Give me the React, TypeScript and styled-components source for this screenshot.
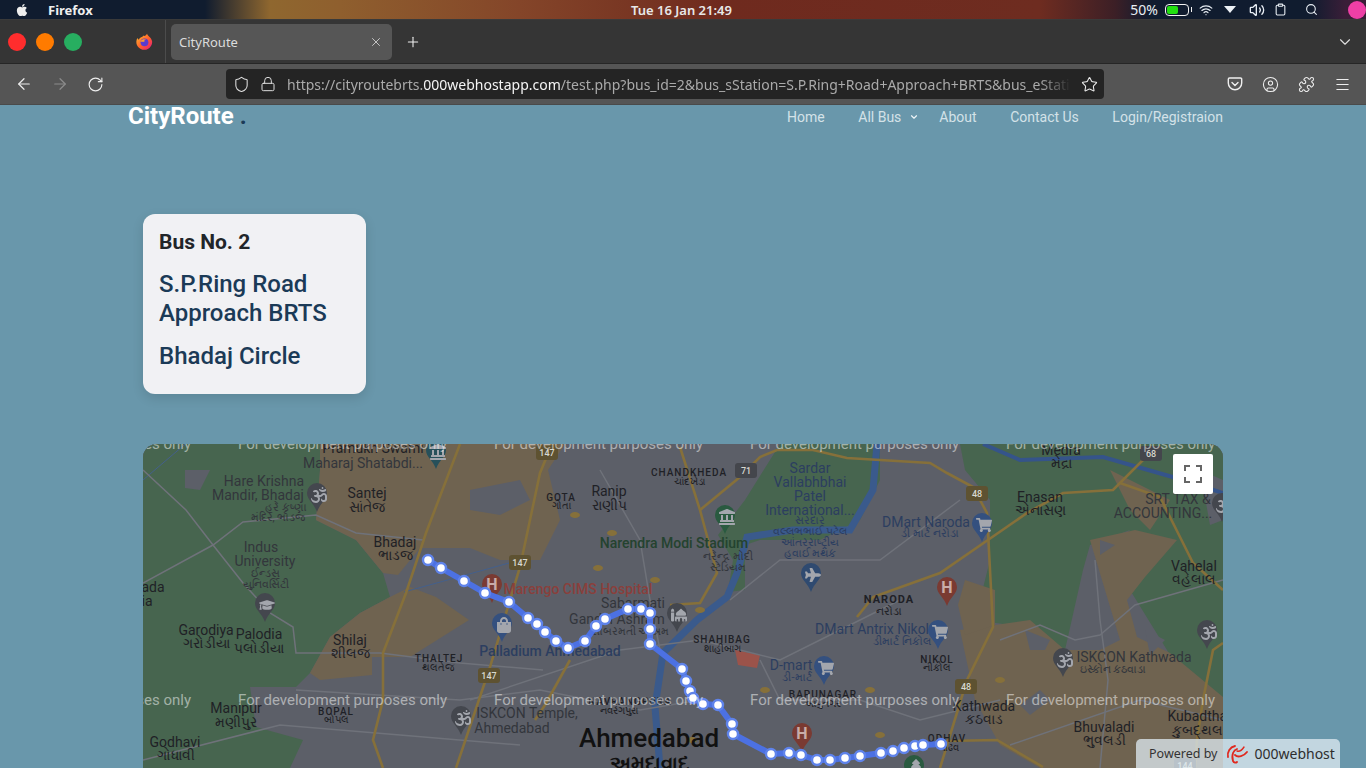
import React from "react";
import styled, { createGlobalStyle } from "styled-components";
import {
  ArrowLeft,
  ArrowRight,
  RotateCw,
  Shield,
  Lock,
  Star,
  Menu,
  Puzzle,
  CircleUser,
  ChevronDown,
  X,
  Plus,
  Wifi,
  Volume2,
  Search,
  Clipboard,
} from "lucide-react";
import {
  FaApple,
  FaOm,
  FaShoppingCart,
  FaShoppingBag,
  FaPlane,
  FaGraduationCap,
  FaMosque,
  FaTree,
  FaLandmark,
} from "react-icons/fa";

const GlobalStyle = createGlobalStyle`
  html, body {
    margin: 0;
    padding: 0;
    height: 100%;
    overflow: hidden;
    background: #6997ab;
  }
  #root { height: 100%; }
  * { box-sizing: border-box; }
`;

const Screen = styled.div`
  position: relative;
  height: 768px;
  display: flex;
  flex-direction: column;
  overflow: hidden;
  font-family: Roboto, sans-serif;
`;

/* desktop top bar */
const TopBar = styled.div`
  height: 20px;
  flex: none;
  display: grid;
  grid-template-columns: 616px auto 1fr;
  align-items: center;
  padding: 0 0 1px 15px;
  color: #e8e8e8;
  font-family: "Noto Sans", sans-serif;
  font-size: 13px;
  background: linear-gradient(
    90deg,
    #101c2f 0,
    #101c2f 205px,
    #8f672f 270px,
    #8f5f2e 340px,
    #844529 520px,
    #6f2a1e 720px,
    #6e2c20 1040px,
    #3c1f26 1115px,
    #101c2f 1150px,
    #101c2f 1310px,
    #3a1e38 1345px
  );
  border-bottom: 1px solid #3a3a3a;
`;

const TopLeft = styled.div`
  display: flex;
  align-items: center;
  gap: 19px;
`;

const AppName = styled.span`
  font-weight: 700;
  color: #eee;
`;

const Clock = styled.span`
  font-weight: 600;
  font-size: 13px;
`;

const TopRight = styled.div`
  display: flex;
  align-items: center;
  justify-content: flex-end;
  color: #e8eef4;
  svg { display: block; }
`;

const Percent = styled.span`
  font-size: 14px;
  margin-right: 7px;
`;

const Battery = styled.div`
  width: 24px;
  height: 12px;
  border: 1.5px solid #f2f2f2;
  border-radius: 4px;
  padding: 1px;
  margin-right: 10px;
  position: relative;
  &::before {
    content: "";
    display: block;
    width: 11px;
    height: 100%;
    border-radius: 2px;
    background: #22e010;
  }
  &::after {
    content: "";
    position: absolute;
    right: -4px;
    top: 2px;
    width: 1.5px;
    height: 5px;
    background: #f2f2f2;
  }
`;

const TrayItem = styled.span<{ $gap: number }>`
  display: inline-flex;
  margin-right: ${(p) => p.$gap}px;
`;

const Triangle = styled.span`
  width: 0;
  height: 0;
  border-left: 6px solid transparent;
  border-right: 6px solid transparent;
  border-top: 7px solid #eef2f6;
  margin-right: 13px;
`;

const Avatar = styled.span`
  width: 18px;
  height: 18px;
  border-radius: 50%;
  background: #ee3fa6;
`;

/* firefox tab strip */
const TabStrip = styled.div`
  height: 44px;
  flex: none;
  display: flex;
  align-items: center;
  background: #353535;
  border-bottom: 1px solid #262626;
`;

const WindowButtons = styled.div`
  width: 166px;
  height: 100%;
  flex: none;
  display: flex;
  align-items: center;
  gap: 10px;
  padding-left: 8px;
  border-right: 1px solid #4c4c4c;
`;

const Dot = styled.span<{ $color: string }>`
  width: 18px;
  height: 18px;
  border-radius: 50%;
  background: ${(p) => p.$color};
`;

const FoxSlot = styled.span`
  display: inline-flex;
  margin-left: 44px;
`;

const Tab = styled.div`
  width: 221px;
  height: 36px;
  margin-left: 5px;
  border-radius: 5px;
  background: #565656;
  display: flex;
  align-items: center;
  justify-content: space-between;
  padding: 1px 9px 0 8px;
  color: #dcdcdc;
  font-family: "Noto Sans", sans-serif;
  font-size: 13px;
`;

const NewTab = styled.span`
  display: inline-flex;
  margin-left: 13px;
  color: #f0f0f0;
`;

const TabEnd = styled.span`
  display: inline-flex;
  margin-left: auto;
  margin-right: 12px;
  color: #ddd;
`;

/* firefox toolbar */
const Toolbar = styled.div`
  height: 41px;
  flex: none;
  display: flex;
  align-items: center;
  background: #555;
  padding-left: 15px;
  color: #eee;
  border-bottom: 1px solid #4a4a4a;
`;

const NavIcon = styled.span<{ $dim?: boolean; $w: number }>`
  display: inline-flex;
  width: ${(p) => p.$w}px;
  color: ${(p) => (p.$dim ? "#8c8c8c" : "#eee")};
`;

const UrlBar = styled.div`
  width: 878px;
  height: 30px;
  background: #242424;
  border-radius: 4px;
  display: flex;
  align-items: center;
  gap: 10px;
  padding: 0 6px 0 7px;
  color: #ddd;
`;

const UrlText = styled.div`
  flex: 1;
  margin-left: 1px;
  overflow: hidden;
  white-space: nowrap;
  font-family: "Noto Sans", sans-serif;
  font-size: 14px;
  color: #aaa;
  -webkit-mask-image: linear-gradient(90deg, #000 96%, transparent);
  mask-image: linear-gradient(90deg, #000 96%, transparent);
  b { font-weight: 400; color: #f4f4f4; }
`;

const ToolGroup = styled.div`
  display: flex;
  align-items: center;
  gap: 19px;
  margin-left: auto;
  padding-right: 15px;
`;

/* the actual page */
const Page = styled.div`
  flex: 1;
  background: #6997ab;
  overflow: hidden;
  padding: 0 143px;
`;

const Nav = styled.nav`
  height: 22px;
  margin-left: -15px;
  display: flex;
  align-items: center;
  justify-content: space-between;
`;

const Brand = styled.a`
  font-size: 24px;
  font-weight: 700;
  color: #fff;
  line-height: 24px;
  span { color: #1b3a57; margin-left: 6px; }
`;

const NavLinks = styled.div`
  display: flex;
  align-items: center;
  padding-top: 1px;
  gap: 33.5px;
`;

const NavLink = styled.a`
  font-size: 14px;
  color: #d4e2e8;
  display: inline-flex;
  align-items: center;
`;

const DropLink = styled(NavLink)`
  margin-right: -13.5px;
  svg { margin-left: 8px; color: #eef4f7; }
`;

const InfoCard = styled.div`
  width: 223px;
  height: 180px;
  margin-top: 87px;
  padding: 16px;
  background: #f1f1f4;
  border-radius: 12px;
  box-shadow: 0 4px 12px rgba(0, 0, 0, 0.12);
`;

const BusNo = styled.div`
  font-size: 21px;
  line-height: 24px;
  font-weight: 700;
  color: #212529;
  margin-bottom: 16px;
`;

const Station = styled.div`
  font-size: 24px;
  line-height: 29px;
  font-weight: 500;
  color: #1b3a57;
  margin-bottom: 14px;
`;

const MapBox = styled.div`
  position: relative;
  width: 1080px;
  height: 400px;
  margin-top: 50px;
  border-radius: 14px;
  overflow: hidden;
  background: #5c5f68;
`;

const MapSvg = styled.svg`
  display: block;
  width: 1080px;
  height: 324px;
`;

const MapText = styled.text<{ $size: number; $color: string; $weight?: number; $track?: number }>`
  font-family: Roboto, "Noto Sans", sans-serif;
  font-size: ${(p) => p.$size}px;
  fill: ${(p) => p.$color};
  font-weight: ${(p) => p.$weight || 400};
  letter-spacing: ${(p) => p.$track || 0}px;
`;

const Watermark = styled.text`
  font-family: Roboto, sans-serif;
  font-size: 15px;
  fill: rgba(255, 255, 255, 0.5);
`;

const FullscreenButton = styled.button`
  position: absolute;
  top: 10px;
  right: 10px;
  width: 40px;
  height: 40px;
  padding: 0;
  border: 0;
  border-radius: 2px;
  background: #fff;
  display: flex;
  align-items: center;
  justify-content: center;
`;

const Powered = styled.div`
  position: absolute;
  left: 1136px;
  bottom: 0;
  width: 204px;
  height: 29px;
  border-radius: 5px 5px 0 0;
  background: rgba(222, 234, 240, 0.76);
  display: flex;
  align-items: center;
  gap: 7px;
  padding: 0 0 0 13px;
  font-family: "Noto Sans", sans-serif;
  font-size: 12.5px;
  color: #333;
  white-space: nowrap;
`;

const PoweredName = styled.span`
  font-size: 14px;
  margin-left: -1px;
  color: #2e2e2e;
`;

const GREY = "#1f2126";
const SOFT = "#33363c";
const BLUE = "#2c3e60";

type L = [string, number, number, number?, string?, number?, number?];

const labels: L[] = [
  ["Pramukh Swami", 373, 453, 14, GREY],
  ["Maharaj Shatabdi...", 363, 468, 14, SOFT],
  ["Hare Krishna", 264, 486, 14, SOFT],
  ["Mandir, Bhadaj", 258, 500, 14, SOFT],
  ["હરે કૃષ્ણા", 286, 511, 11, SOFT],
  ["મંદિર, ભાડજ", 278, 521, 11, SOFT],
  ["Santej", 367, 498],
  ["સાંતેજ", 367, 512],
  ["Bhadaj", 395, 547],
  ["ભાડજ", 395, 560],
  ["Indus", 261, 552, 14, SOFT],
  ["University", 265, 566, 14, SOFT],
  ["ઈન્ડસ", 265, 577, 11, SOFT],
  ["યુનિવર્સિટી", 266, 588, 11, SOFT],
  ["ada", 153, 592],
  ["ia", 147, 606],
  ["Garodiya", 206, 635],
  ["ગરોડીયા", 206, 648],
  ["Palodia", 259, 639],
  ["પલોડીયા", 259, 653],
  ["Shilaj", 350, 645],
  ["શીલજ", 350, 658],
  ["THALTEJ", 439, 662, 10, GREY, 500, 1],
  ["થલતેજ", 438, 671, 10],
  ["BOPAL", 336, 715, 10, GREY, 500, 1],
  ["બોપલ", 336, 723, 10],
  ["Manipur", 236, 713],
  ["મણીપુર", 236, 727],
  ["Godhavi", 175, 747],
  ["ગોધાવી", 176, 760],
  ["Marengo CIMS Hospital", 578, 594, 14, "#8a3f3c", 500],
  ["Palladium Ahmedabad", 550, 656, 14, BLUE, 500],
  ["ISKCON Temple,", 527, 718, 14, SOFT],
  ["Ahmedabad", 512, 733, 14, SOFT],
  ["GOTA", 561, 501, 10, GREY, 500, 1],
  ["ગોતા", 561, 509, 10],
  ["Ranip", 609, 496],
  ["રાણીપ", 609, 510],
  ["CHANDKHEDA", 689, 476, 10, GREY, 500, 1],
  ["ચાંદખેડા", 689, 485, 10],
  ["Sardar", 810, 473, 14, BLUE],
  ["Vallabhbhai", 810, 487, 14, BLUE],
  ["Patel", 810, 501, 14, BLUE],
  ["International...", 810, 515, 14, BLUE],
  ["સરદાર", 810, 524, 11, BLUE],
  ["વલ્લભભાઈ પટેલ", 810, 535, 11, BLUE],
  ["આંતરરાષ્ટ્રીય", 810, 546, 11, BLUE],
  ["હવાઈ મથક", 810, 557, 11, BLUE],
  ["DMart Naroda", 926, 527, 14, BLUE],
  ["ડી માર્ટ નરોડા", 930, 537, 11, BLUE],
  ["Narendra Modi Stadium", 674, 548, 14, "#24432f", 500],
  ["નરેન્દ્ર મોદી", 728, 560, 11, SOFT],
  ["સ્ટેડિયમ", 728, 571, 11, SOFT],
  ["Sabarmati", 633, 608, 14, SOFT],
  ["Gandhi Ashram", 617, 624, 14, SOFT],
  ["સાબરમતી આશ્રમ", 630, 635, 11, SOFT],
  ["SHAHIBAG", 722, 643, 10, GREY, 500, 1],
  ["શાહીબાગ", 722, 652, 10],
  ["NARODA", 889, 603, 11, GREY, 700, 1],
  ["નરોડા", 889, 615, 11],
  ["DMart Antrix Nikol", 872, 634, 14, BLUE],
  ["ડીમાર્ટ નિકોલ", 902, 645, 11, BLUE],
  ["D-mart", 791, 670, 14, BLUE],
  ["ડી-માર્ટ", 797, 681, 11, BLUE],
  ["NIKOL", 937, 663, 10, GREY, 500, 1],
  ["નીકોલ", 937, 671, 10],
  ["BAPUNAGAR", 823, 698, 10, GREY, 500, 1],
  ["બાપુનગર", 823, 707, 10],
  ["NAVRANGPURA", 630, 705, 10, GREY, 500, 1],
  ["નવરંગપુરા", 619, 714, 10],
  ["Ahmedabad", 649, 747, 26, "#111", 500],
  ["અમદાવાદ", 649, 770, 20, "#111", 700],
  ["Medra", 1061, 455],
  ["મેદ્રા", 1061, 468],
  ["Enasan", 1040, 502],
  ["એનાસણ", 1040, 515],
  ["SRT TAX &", 1178, 504, 14, SOFT],
  ["ACCOUNTING...", 1163, 518, 14, SOFT],
  ["Vahelal", 1194, 571],
  ["વહેલાલ", 1194, 584],
  ["ISKCON Kathwada", 1134, 662, 14, SOFT],
  ["ઇસ્કોન કઠવાડા", 1113, 673, 11, SOFT],
  ["Kathwada", 984, 711],
  ["કઠવાડ", 984, 724],
  ["Bhuvaladi", 1104, 732],
  ["ભુવલડી", 1104, 745],
  ["Kubadthal", 1199, 721],
  ["કુબદ્થલ", 1197, 735],
  ["ODHAV", 947, 742, 10, GREY, 500, 1],
  ["ઓઢવ", 947, 751, 10],
];

const route: [number, number][] = [
  [428, 560], [441, 568], [464, 581], [485, 593], [509, 602], [528, 618], [537, 624], [545, 632],
  [556, 641], [568, 648], [585, 641], [596, 626], [605, 619], [628, 609], [641, 609], [650, 613],
  [650, 629], [650, 644], [682, 669], [686, 681], [690, 691], [693, 698], [703, 704], [718, 705],
  [732, 724], [733, 734], [771, 754], [789, 753], [801, 755], [817, 760], [830, 760], [845, 758],
  [860, 756], [881, 753], [893, 751], [904, 748], [915, 746], [923, 745], [941, 744],
];

const TERRAIN = {
  green: [
    "320,444 320,470 316,520 356,540 383,573 390,597 360,613 330,637 310,673 296,687 250,687 256,727 303,740 290,768 143,768 143,444",
    "960,444 1223,444 1223,700 1170,655 1130,590 1120,540 1130,530 1090,545 1083,570 1065,650 1010,625 975,620 990,560 990,500 965,470",
    "780,444 880,444 880,480 860,520 820,540 760,540 745,545 745,590 728,592 733,560 718,535 745,500",
  ],
  tan: [
    "320,444 320,470 316,520 356,540 383,573 398,575 420,548 470,548 500,560 540,560 560,520 548,470 565,444",
    "310,673 330,637 360,613 390,597 410,587 436,597 469,620 410,657 372,657 372,675 320,680",
    "1090,540 1135,530 1177,540 1145,577 1127,600 1137,637 1170,653 1223,697 1223,768 1130,768 1040,768 1000,745 975,700 960,630 1030,620 1065,650 1100,650 1120,640",
    "965,580 995,590 995,625 965,635 958,605",
    "1110,470 1150,490 1170,500 1150,530 1130,510",
  ],
  grey: [
    "470,490 520,480 530,500 500,515 470,510",
    "185,470 210,470 200,490 185,488",
    "1100,540 1115,545 1100,555",
    "1040,690 1050,700 1030,715 1020,705",
    "1145,630 1165,640 1150,655",
    "1025,630 1050,640 1045,650 1030,650",
    "1200,470 1223,480 1223,520 1210,525",
  ],
};

const YELLOW = "#86703a";
const majorRoads = [
  "M460 444 L426 533 L406 593 L383 653 L383 700 L373 740 L383 768",
  "M552 444 L540 473 L520 567 L510 600 L490 667 L456 768",
  "M680 447 L700 510 L717 573 L700 603 L670 605",
  "M700 510 L740 477 L760 457 L777 450 L813 450 L847 458 L930 463 L947 473 L973 487 L987 513 L993 627 L967 680 L940 768",
  "M857 617 L873 597 L940 573 L1027 513 L1063 493 L1113 490 L1143 460 L1152 450",
  "M1120 483 L1160 497 L1180 537 L1193 563 L1223 590",
  "M1223 643 L1213 650 L1203 700 L1197 740 L1195 768",
  "M945 741 L997 740 L1043 767",
  "M570 660 L545 705 L535 720",
];

const minorRoads = [
  "M143 470 L186 510 L213 545 L243 583 L270 613 L293 627 L296 653 L380 653 L460 663 L543 670",
  "M143 583 L213 545 L243 522 L316 515 L356 533 L423 540",
  "M296 690 L460 700 L540 690 L640 710 L700 700",
  "M470 700 L620 650 L700 640 L780 660 L820 640 L900 600",
  "M600 470 L640 540 L650 600 L660 650",
  "M730 600 L780 560 L880 560 L960 500",
  "M760 660 L780 700 L860 700 L920 720 L1000 700",
  "M1000 640 L1040 625 L1075 640 L1100 635 L1135 605 L1223 580",
  "M1010 745 L1140 700 L1223 720",
  "M143 760 L280 725 L400 735 L520 745",
  "M1095 560 L1100 620 L1108 680 L1100 768",
];

function PinGlyph({ icon, color }: { icon: React.ComponentType<any>; color: string }) {
  const Icon = icon;
  return <Icon x={-6} y={-6} width={12} height={12} color={color} />;
}

function Pin({ x, y, fill, icon, letter }: { x: number; y: number; fill: string; icon?: React.ComponentType<any>; letter?: string }) {
  return (
    <g transform={`translate(${x} ${y})`}>
      <path d="M0 -10 A10 10 0 0 1 10 0 C10 7 3 10 0 19 C-3 10 -10 7 -10 0 A10 10 0 0 1 0 -10Z" fill={fill} />
      {icon && <PinGlyph icon={icon} color="#a3a6ad" />}
      {letter && (
        <MapText x={0} y={6} textAnchor="middle" $size={16} $color="#c9aca8" $weight={700}>
          {letter}
        </MapText>
      )}
    </g>
  );
}

const NAVY = "#34507f";
const PINGREY = "#44474e";
const RED = "#7a3a32";

const pins = [
  { x: 436, y: 450, fill: "#27505a", icon: FaLandmark },
  { x: 317, y: 493, fill: PINGREY, icon: FaOm },
  { x: 265, y: 603, fill: PINGREY, icon: FaGraduationCap },
  { x: 492, y: 584, fill: RED, letter: "H" },
  { x: 502, y: 623, fill: NAVY, icon: FaShoppingBag },
  { x: 461, y: 716, fill: PINGREY, icon: FaOm },
  { x: 725, y: 515, fill: "#2a5a40", icon: FaLandmark },
  { x: 677, y: 613, fill: PINGREY, icon: FaMosque },
  { x: 811, y: 573, fill: "#2f4a70", icon: FaPlane },
  { x: 824, y: 666, fill: NAVY, icon: FaShoppingCart },
  { x: 938, y: 630, fill: NAVY, icon: FaShoppingCart },
  { x: 802, y: 733, fill: RED, letter: "H" },
  { x: 914, y: 765, fill: "#2a5a40", icon: FaTree },
  { x: 982, y: 523, fill: NAVY, icon: FaShoppingCart },
  { x: 947, y: 587, fill: RED, letter: "H" },
  { x: 1207, y: 630, fill: PINGREY, icon: FaOm },
  { x: 1063, y: 658, fill: PINGREY, icon: FaOm },
  { x: 1222, y: 503, fill: PINGREY, icon: FaOm },
];

const shields: [string, number, number, string][] = [
  ["147", 547, 452, "#5e5231"],
  ["147", 520, 562, "#5e5231"],
  ["147", 489, 675, "#5e5231"],
  ["48", 977, 493, "#5e5231"],
  ["48", 966, 686, "#5e5231"],
  ["71", 746, 470, "#44464c"],
  ["68", 1151, 453, "#44464c"],
  ["144", 1185, 765, "#44464c"],
];

function CityMap() {
  return (
    <MapSvg viewBox="143 444 1080 324">
      <rect x="143" y="444" width="1080" height="324" fill="#5c5f68" />
      {TERRAIN.green.map((p) => <polygon key={p} points={p} fill="#47654f" />)}
      {TERRAIN.tan.map((p) => <polygon key={p} points={p} fill="#6f6350" />)}
      {TERRAIN.grey.map((p) => <polygon key={p} points={p} fill="#5c5f68" />)}
      <path d="M877 444 L873 490 L850 530 L793 530 L747 537 L737 573 L727 597 L697 620 L663 653 L655 707 L660 768" fill="none" stroke="#3a5a8c" strokeWidth="7" />
      <path d="M983 444 L1020 460 L1103 457 L1183 480 L1223 493" fill="none" stroke="#35548a" strokeWidth="4" />
      <path d="M404 592 L520 560 M143 480 L190 440" fill="none" stroke="#44608c" strokeWidth="1" />
      <polygon points="735,650 760,655 757,668 738,665" fill="#9b534a" />
      {minorRoads.map((d) => <path key={d} d={d} fill="none" stroke="#6f727a" strokeWidth="1.5" />)}
      {majorRoads.map((d) => <path key={d} d={d} fill="none" stroke={YELLOW} strokeWidth="2.6" />)}
      {[[575, 515], [612, 533], [655, 580], [598, 568], [765, 690], [692, 740], [700, 610], [870, 690], [1000, 680], [880, 735]].map(([x, y]) => (
        <ellipse key={x} cx={x} cy={y} rx="5" ry="3" fill="#86703a" />
      ))}
      {shields.map(([t, x, y, c]) => (
        <g key={t + x}>
          <rect x={x - 11} y={y - 7} width="22" height="15" rx="3" fill={c} />
          <MapText x={x} y={y + 4} textAnchor="middle" $size={9} $color="#d8d8d0" $weight={500}>{t}</MapText>
        </g>
      ))}
      {labels.map(([t, x, y, size = 14, color = GREY, weight, track]) => (
        <MapText key={t + x} x={x} y={y} textAnchor="middle" $size={size} $color={color} $weight={weight} $track={track}>
          {t}
        </MapText>
      ))}
      {pins.map((p) => <Pin key={`${p.x}-${p.y}`} {...p} />)}
      <polyline points={route.map((p) => p.join(",")).join(" ")} fill="none" stroke="#4c71e3" strokeWidth="6" strokeLinejoin="round" />
      {route.map(([x, y]) => (
        <circle key={`${x}-${y}`} cx={x} cy={y} r="5" fill="#fff" stroke="#5f83ea" strokeWidth="2.4" />
      ))}
      {[-18, 238, 494, 750, 1006].map((x) => (
        <React.Fragment key={x}>
          <Watermark x={x} y={449}>For development purposes only</Watermark>
          <Watermark x={x} y={705}>For development purposes only</Watermark>
        </React.Fragment>
      ))}
    </MapSvg>
  );
}

function FirefoxLogo() {
  return (
    <svg width="17" height="17" viewBox="0 0 20 20">
      <defs>
        <linearGradient id="fox" x1="0" y1="0" x2="1" y2="1">
          <stop offset="0" stopColor="#ffc22e" />
          <stop offset="0.55" stopColor="#ff5a2c" />
          <stop offset="1" stopColor="#e31587" />
        </linearGradient>
      </defs>
      <path d="M13 1 C14 4 18 5 19 10 A9.3 9.3 0 1 1 1.6 6 C2 7 2.6 7.6 3.4 8 C4 5 8 5 9 3 C10 4 12 3 13 1Z" fill="url(#fox)" />
      <circle cx="10" cy="11" r="4.6" fill="#5a3bd0" />
      <path d="M5 10 C7 7 10 7 12 8 C10 8.5 9 9 10 10.5 C8 10 6.5 10.5 5 10Z" fill="#ff9a2c" />
    </svg>
  );
}

function PocketIcon() {
  return (
    <svg width="16" height="16" viewBox="0 0 16 16" fill="none" stroke="#eee" strokeWidth="1.4">
      <path d="M2.5 2 H13.5 A1.2 1.2 0 0 1 14.7 3.2 V7 A6.7 6.7 0 0 1 1.3 7 V3.2 A1.2 1.2 0 0 1 2.5 2Z" />
      <path d="M5 6.5 L8 9.5 L11 6.5" strokeLinecap="round" />
    </svg>
  );
}

function HostLogo() {
  return (
    <svg width="24" height="20" viewBox="0 0 24 20" fill="none" stroke="#e0281e" strokeLinecap="round">
      <path d="M11 2 C6 3 3 8 4 13" strokeWidth="1.8" />
      <path d="M13 5 C10 6 7 10 9 17 C10 19 12 19 13 18" strokeWidth="1.8" />
      <path d="M11 11 C14 14 20 12 23 8" strokeWidth="1.8" />
      <path d="M13 7 C16 8 18 6 20 3" strokeWidth="1.4" />
    </svg>
  );
}

export default function App() {
  return (
    <Screen>
      <GlobalStyle />
      <TopBar>
        <TopLeft>
          <FaApple size={14} color="#eee" />
          <AppName>Firefox</AppName>
        </TopLeft>
        <Clock>Tue 16 Jan 21:49</Clock>
        <TopRight>
          <Percent>50%</Percent>
          <Battery />
          <TrayItem $gap={11}><Wifi size={14} /></TrayItem>
          <Triangle />
          <TrayItem $gap={9}><Volume2 size={16} /></TrayItem>
          <TrayItem $gap={18}><Clipboard size={13} /></TrayItem>
          <TrayItem $gap={30}><Search size={13} /></TrayItem>
          <Avatar />
        </TopRight>
      </TopBar>

      <TabStrip>
        <WindowButtons>
          <Dot $color="#ff2d2d" />
          <Dot $color="#ff7b00" />
          <Dot $color="#27ae60" />
          <FoxSlot><FirefoxLogo /></FoxSlot>
        </WindowButtons>
        <Tab>
          CityRoute
          <X size={14} strokeWidth={1.4} />
        </Tab>
        <NewTab><Plus size={16} strokeWidth={1.6} /></NewTab>
        <TabEnd><ChevronDown size={18} strokeWidth={1.5} /></TabEnd>
      </TabStrip>

      <Toolbar>
        <NavIcon $w={36}><ArrowLeft size={18} strokeWidth={1.6} /></NavIcon>
        <NavIcon $w={36} $dim><ArrowRight size={18} strokeWidth={1.6} /></NavIcon>
        <NavIcon $w={139}><RotateCw size={17} strokeWidth={1.6} /></NavIcon>
        <UrlBar>
          <Shield size={17} strokeWidth={1.5} />
          <Lock size={16} strokeWidth={1.5} />
          <UrlText>
            https://cityroutebrts.<b>000webhostapp.com</b>/test.php?bus_id=2&amp;bus_sStation=S.P.Ring+Road+Approach+BRTS&amp;bus_eStation=Bhadaj+Circle
          </UrlText>
          <Star size={17} strokeWidth={1.5} color="#eee" />
        </UrlBar>
        <ToolGroup>
          <PocketIcon />
          <CircleUser size={17} strokeWidth={1.5} />
          <Puzzle size={17} strokeWidth={1.5} />
          <Menu size={17} strokeWidth={1.5} />
        </ToolGroup>
      </Toolbar>

      <Page>
        <Nav>
          <Brand>CityRoute<span>.</span></Brand>
          <NavLinks>
            <NavLink>Home</NavLink>
            <DropLink>All Bus<ChevronDown size={10} strokeWidth={2.8} /></DropLink>
            <NavLink>About</NavLink>
            <NavLink>Contact Us</NavLink>
            <NavLink>Login/Registraion</NavLink>
          </NavLinks>
        </Nav>
        <InfoCard>
          <BusNo>Bus No. 2</BusNo>
          <Station>S.P.Ring Road Approach BRTS</Station>
          <Station>Bhadaj Circle</Station>
        </InfoCard>
        <MapBox>
          <CityMap />
          <FullscreenButton aria-label="Fullscreen">
            <svg width="18" height="18" viewBox="0 0 18 18" fill="none" stroke="#666" strokeWidth="2">
              <path d="M1 6 V1 H6 M12 1 H17 V6 M17 12 V17 H12 M6 17 H1 V12" />
            </svg>
          </FullscreenButton>
        </MapBox>
      </Page>

      <Powered>
        <span>Powered by</span>
        <HostLogo />
        <PoweredName>000webhost</PoweredName>
      </Powered>
    </Screen>
  );
}
